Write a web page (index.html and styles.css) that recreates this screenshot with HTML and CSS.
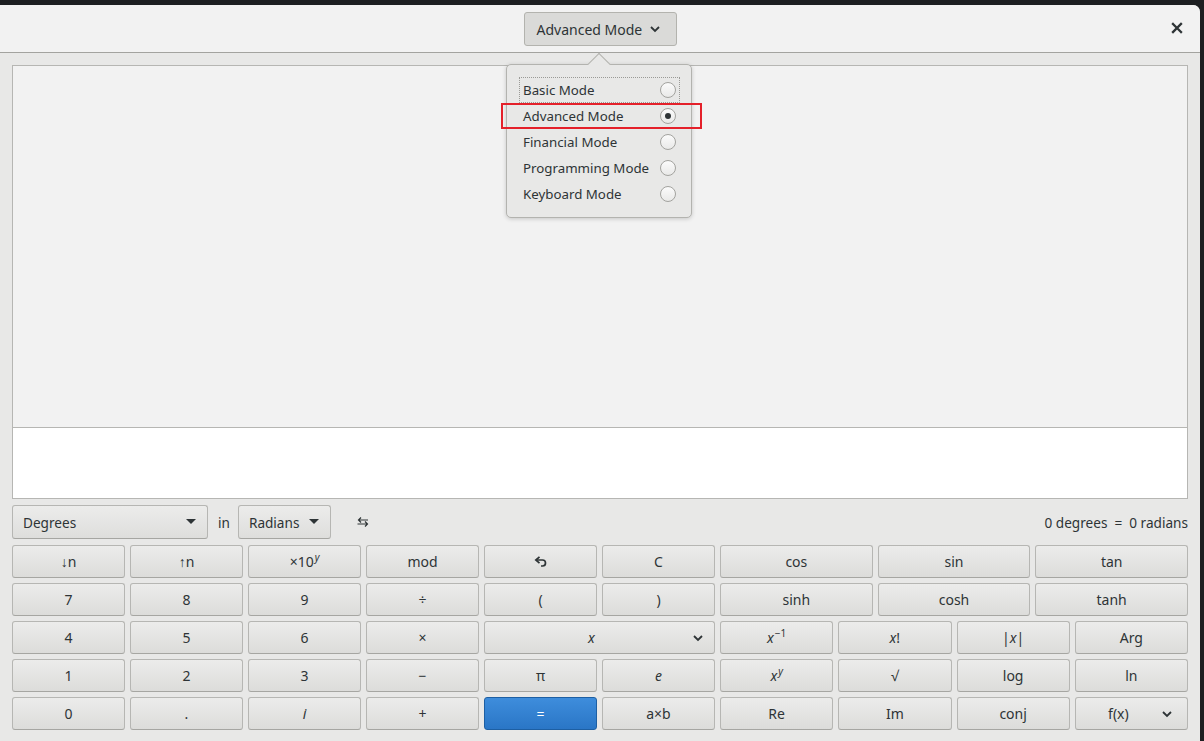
FILE: index.html
```html
<!DOCTYPE html>
<html lang="en">
<head>
<meta charset="utf-8">
<title>Calculator</title>
<link rel="stylesheet" href="styles.css">
</head>
<body>
<div class="window">
  <header class="headerbar">
    <div class="hb-side"></div>
    <button class="mode-btn"><span>Advanced Mode</span>
      <svg class="chev" width="12" height="12" viewBox="0 0 12 12"><polyline points="2,4 6,8 10,4" fill="none" stroke="#2e3436" stroke-width="1.8"/></svg>
    </button>
    <div class="hb-side hb-right">
      <button class="close-btn" aria-label="Close">
        <svg width="12" height="12" viewBox="0 0 12 12"><path d="M2 2 L10 10 M10 2 L2 10" stroke="#2e3436" stroke-width="2.3" stroke-linecap="square"/></svg>
      </button>
    </div>
  </header>

  <main class="content">
    <div class="display">
      <div class="history"></div>
      <div class="entry"></div>
    </div>

    <div class="convert-row">
      <div class="combo combo-deg"><span>Degrees</span><svg width="10" height="6" viewBox="0 0 10 6"><polygon points="0,0 10,0 5,5" fill="#2e3436"/></svg></div>
      <span class="in-label">in</span>
      <div class="combo combo-rad"><span>Radians</span><svg width="10" height="6" viewBox="0 0 10 6"><polygon points="0,0 10,0 5,5" fill="#2e3436"/></svg></div>
      <span class="swap">
        <svg width="12" height="10" viewBox="0 0 12 10"><path d="M1.5 3 H11 M4 0.5 L1.5 3 L4 5.5 M0.5 7 H10 M8 4.5 L10.5 7 L8 9.5" fill="none" stroke="#2e3436" stroke-width="1.2"/></svg>
      </span>
      <span class="result">0 degrees&nbsp; = &nbsp;0 radians</span>
    </div>

    <div class="keypad">
      <div class="kp-left">
        <button class="key"><span>↓n</span></button>
        <button class="key"><span>↑n</span></button>
        <button class="key"><span>×10<sup><i>y</i></sup></span></button>
        <button class="key"><span>mod</span></button>
        <button class="key"><svg width="13" height="12" viewBox="0 0 13 12"><path d="M2.5 4 H8.5 A3 3 0 0 1 8.5 10 H7" fill="none" stroke="#2e3436" stroke-width="1.7"/><path d="M5.5 0.8 L1.8 4 L5.5 7.2" fill="none" stroke="#2e3436" stroke-width="1.7"/></svg></button>
        <button class="key"><span>C</span></button>

        <button class="key"><span>7</span></button>
        <button class="key"><span>8</span></button>
        <button class="key"><span>9</span></button>
        <button class="key"><span>÷</span></button>
        <button class="key"><span>(</span></button>
        <button class="key"><span>)</span></button>

        <button class="key"><span>4</span></button>
        <button class="key"><span>5</span></button>
        <button class="key"><span>6</span></button>
        <button class="key"><span>×</span></button>
        <button class="key key-drop w2"><span class="lbl lbl-x"><i>x</i></span><svg class="kchev" width="12" height="12" viewBox="0 0 12 12"><polyline points="2,4 6,8 10,4" fill="none" stroke="#2e3436" stroke-width="1.8"/></svg></button>

        <button class="key"><span>1</span></button>
        <button class="key"><span>2</span></button>
        <button class="key"><span>3</span></button>
        <button class="key"><span>−</span></button>
        <button class="key"><span>π</span></button>
        <button class="key"><span><i>e</i></span></button>

        <button class="key"><span>0</span></button>
        <button class="key"><span>.</span></button>
        <button class="key"><span><i>i</i></span></button>
        <button class="key"><span>+</span></button>
        <button class="key key-blue"><span>=</span></button>
        <button class="key"><span>a×b</span></button>
      </div>

      <div class="kp-right">
        <button class="key w4"><span>cos</span></button>
        <button class="key w4"><span>sin</span></button>
        <button class="key w4"><span>tan</span></button>

        <button class="key w4"><span>sinh</span></button>
        <button class="key w4"><span>cosh</span></button>
        <button class="key w4"><span>tanh</span></button>

        <button class="key w3"><span><i>x</i><sup>−1</sup></span></button>
        <button class="key w3"><span><i>x</i>!</span></button>
        <button class="key w3"><span>|<i>x</i>|</span></button>
        <button class="key w3"><span>Arg</span></button>

        <button class="key w3"><span><i>x</i><sup><i>y</i></sup></span></button>
        <button class="key w3"><span>√</span></button>
        <button class="key w3"><span>log</span></button>
        <button class="key w3"><span>ln</span></button>

        <button class="key w3"><span>Re</span></button>
        <button class="key w3"><span>Im</span></button>
        <button class="key w3"><span>conj</span></button>
        <button class="key key-drop w3"><span class="lbl lbl-f">f(x)</span><svg class="kchev kchev-f" width="12" height="12" viewBox="0 0 12 12"><polyline points="2,4 6,8 10,4" fill="none" stroke="#2e3436" stroke-width="1.8"/></svg></button>
      </div>
    </div>
  </main>

  <div class="popover">
    <div class="pop-arrow"></div>
    <div class="pop-item focused"><span>Basic Mode</span><span class="radio"></span></div>
    <div class="pop-item"><span>Advanced Mode</span><span class="radio checked"></span></div>
    <div class="pop-item"><span>Financial Mode</span><span class="radio"></span></div>
    <div class="pop-item"><span>Programming Mode</span><span class="radio"></span></div>
    <div class="pop-item"><span>Keyboard Mode</span><span class="radio"></span></div>
  </div>
  <div class="highlight"></div>
</div>
</body>
</html>
```

FILE: styles.css
```css
* { box-sizing: border-box; }

body {
  margin: 0;
  width: 1204px;
  height: 741px;
  overflow: hidden;
  background: #1d1f21;
  font-family: "Noto Sans", "Open Sans", sans-serif;
  color: #2e3436;
}

.window {
  position: relative;
  margin-top: 5px;
  width: 1200px;
  height: 736px;
  background: #e8e8e7;
  border-top-right-radius: 7px;
  display: flex;
  flex-direction: column;
}

/* Header bar */
.headerbar {
  height: 48px;
  background: #f2f2f2;
  border-bottom: 1px solid #a3a39f;
  border-top-right-radius: 7px;
  display: grid;
  grid-template-columns: 1fr auto 1fr;
  align-items: start;
}

.hb-right {
  display: flex;
  justify-content: flex-end;
}

.mode-btn {
  margin-top: 7px;
  width: 153px;
  height: 34px;
  padding: 0 12px;
  border: 1px solid #b3b3ae;
  border-radius: 3px;
  background: #dadad8;
  font-family: inherit;
  font-size: 14px;
  color: #2e3436;
  display: flex;
  align-items: center;
  justify-content: space-between;
}

.mode-btn .chev { margin-right: 3px; }

.close-btn {
  margin-top: 6px;
  margin-right: 6px;
  width: 34px;
  height: 34px;
  border: none;
  background: transparent;
  padding: 0;
  display: flex;
  align-items: center;
  justify-content: center;
}

/* Content */
.content {
  padding: 12px 12px 11px;
  display: flex;
  flex-direction: column;
}

.display {
  height: 434px;
  border: 1px solid #b6b6b3;
  display: flex;
  flex-direction: column;
}

.history {
  height: 362px;
  background: #f2f2f2;
  border-bottom: 1px solid #b6b6b3;
}

.entry {
  flex: 1;
  background: #ffffff;
}

.convert-row {
  margin-top: 6px;
  height: 34px;
  display: flex;
  align-items: center;
  font-size: 13.6px;
}

.combo {
  height: 34px;
  border: 1px solid #b6b6b3;
  border-bottom-color: #a6a6a2;
  border-radius: 3px;
  background: linear-gradient(#ececeb, #dededc);
  display: flex;
  align-items: center;
  justify-content: space-between;
  padding: 0 11px 0 10px;
}

.combo-deg { width: 196px; }
.combo-rad { width: 93px; }

.in-label { margin: 0 8px 0 10px; }

.swap {
  width: 34px;
  height: 34px;
  margin-left: 15px;
  display: flex;
  align-items: center;
  justify-content: center;
}

.result {
  margin-left: auto;
  white-space: pre;
}

/* Keypad */
.keypad {
  margin-top: 6px;
  display: flex;
  gap: 5px;
}

.kp-left {
  display: grid;
  grid-template-columns: repeat(6, 113px);
  grid-template-rows: repeat(5, 33px);
  gap: 5px;
}

.kp-right {
  flex: 1;
  display: grid;
  grid-template-columns: repeat(12, 1fr);
  grid-template-rows: repeat(5, 33px);
  gap: 5px;
}

.w2 { grid-column: span 2; }
.w3 { grid-column: span 3; }
.w4 { grid-column: span 4; }

.key {
  margin: 0;
  padding: 0;
  border: 1px solid #b6b6b3;
  border-bottom-color: #a6a6a2;
  border-radius: 3px;
  background: linear-gradient(#ececeb, #dcdcda);
  font-family: inherit;
  font-size: 14px;
  color: #2e3436;
  display: flex;
  align-items: center;
  justify-content: center;
  line-height: 1;
}

.key sup {
  font-size: 0.72em;
  line-height: 0;
  vertical-align: baseline;
  position: relative;
  top: -0.5em;
  margin-left: 1px;
}

.key-drop { justify-content: space-between; }
.key-drop .lbl { flex: 1; text-align: center; }
.lbl-x { padding-left: 6px; }
.kchev { margin-right: 10px; }
.kchev-f { margin-right: 14px; }

.key-blue {
  background: linear-gradient(#3e8ddc, #2a76c6);
  border-color: #1d5fa3;
  color: #ffffff;
}

/* Popover */
.popover {
  position: absolute;
  left: 506px;
  top: 59px;
  width: 186px;
  height: 154px;
  background: #e8e8e7;
  border: 1px solid #b3b3af;
  border-radius: 5px;
  box-shadow: 0 1px 4px rgba(0, 0, 0, 0.18);
  padding: 12px 12px 0;
  font-size: 13.3px;
}

.pop-arrow {
  position: absolute;
  left: 84px;
  top: -9px;
  width: 16px;
  height: 16px;
  background: #e8e8e7;
  border-top: 1px solid #b3b3af;
  border-left: 1px solid #b3b3af;
  transform: rotate(45deg);
}

.pop-item {
  position: relative;
  height: 26px;
  display: flex;
  align-items: center;
  justify-content: space-between;
  padding: 0 3px 0 3px;
  border: 1px solid transparent;
  margin-right: -1px;
}

.pop-item.focused {
  border: 1px dotted #9a9a96;
}

.radio {
  width: 16px;
  height: 16px;
  border-radius: 50%;
  border: 1px solid #a3a39f;
  background: linear-gradient(#fbfbfb, #e9e9e8);
  display: flex;
  align-items: center;
  justify-content: center;
}

.radio.checked::after {
  content: "";
  width: 6px;
  height: 6px;
  border-radius: 50%;
  background: #2e3436;
}

.highlight {
  position: absolute;
  left: 501px;
  top: 98px;
  width: 201px;
  height: 26px;
  border: 2px solid #e4202a;
}
```
